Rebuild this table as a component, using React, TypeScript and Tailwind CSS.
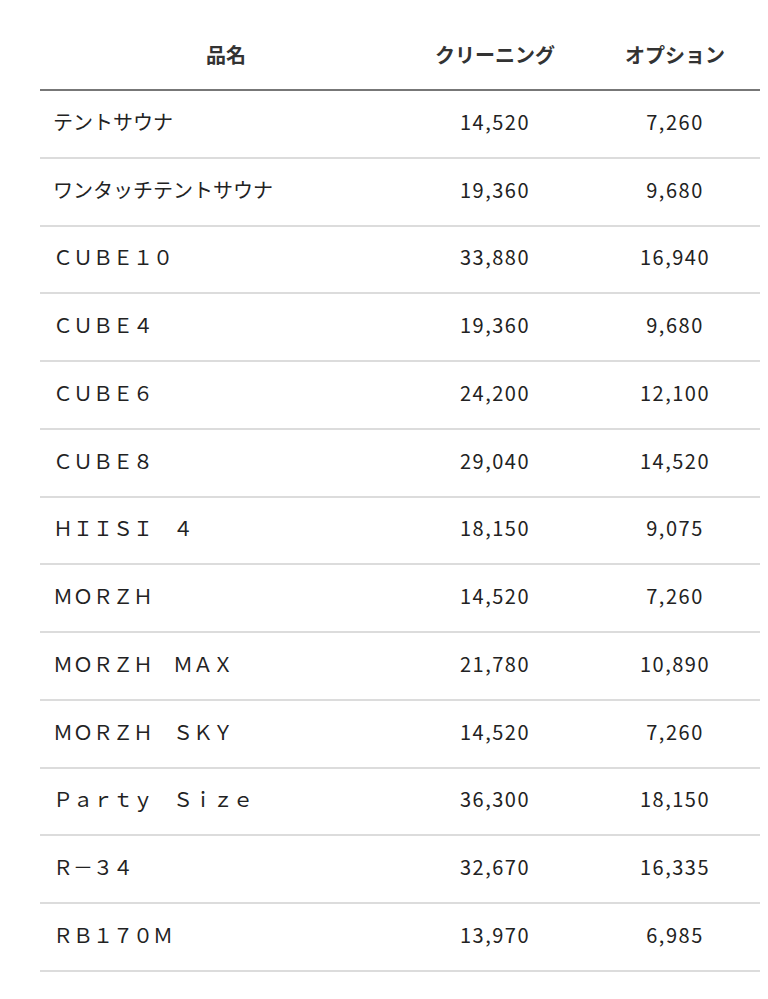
const rows: [string, string, string][] = [
  ["テントサウナ", "14,520", "7,260"],
  ["ワンタッチテントサウナ", "19,360", "9,680"],
  ["ＣＵＢＥ１０", "33,880", "16,940"],
  ["ＣＵＢＥ４", "19,360", "9,680"],
  ["ＣＵＢＥ６", "24,200", "12,100"],
  ["ＣＵＢＥ８", "29,040", "14,520"],
  ["ＨＩＩＳＩ　４", "18,150", "9,075"],
  ["ＭＯＲＺＨ", "14,520", "7,260"],
  ["ＭＯＲＺＨ　ＭＡＸ", "21,780", "10,890"],
  ["ＭＯＲＺＨ　ＳＫＹ", "14,520", "7,260"],
  ["Ｐａｒｔｙ　Ｓｉｚｅ", "36,300", "18,150"],
  ["Ｒ－３４", "32,670", "16,335"],
  ["ＲＢ１７０Ｍ", "13,970", "6,985"],
];

export default function App() {
  return (
    <div
      className="min-h-[999px] bg-white pl-10 pr-2 text-[20px] leading-[28px] text-[#222]"
      style={{ fontFamily: '"Noto Sans CJK JP", "Noto Sans", sans-serif' }}
    >
      {/* header */}
      <div className="grid h-[91px] grid-cols-[372px_166px_182px] items-center border-b-2 border-[#777] pt-[20px] font-bold text-[#333]">
        <div className="text-center">品名</div>
        <div className="text-center">クリーニング</div>
        <div className="pl-3 text-center">オプション</div>
      </div>

      {rows.map(([name, clean, opt]) => (
        <div
          key={name}
          className="grid h-[67.75px] grid-cols-[372px_166px_182px] items-center border-b-2 border-[#dcdcdc] pb-[4px]"
        >
          <div className="pl-[13px]">{name}</div>
          <div className="text-center tracking-[1.5px]">{clean}</div>
          <div className="pl-3 text-center tracking-[1.5px]">{opt}</div>
        </div>
      ))}
    </div>
  );
}
